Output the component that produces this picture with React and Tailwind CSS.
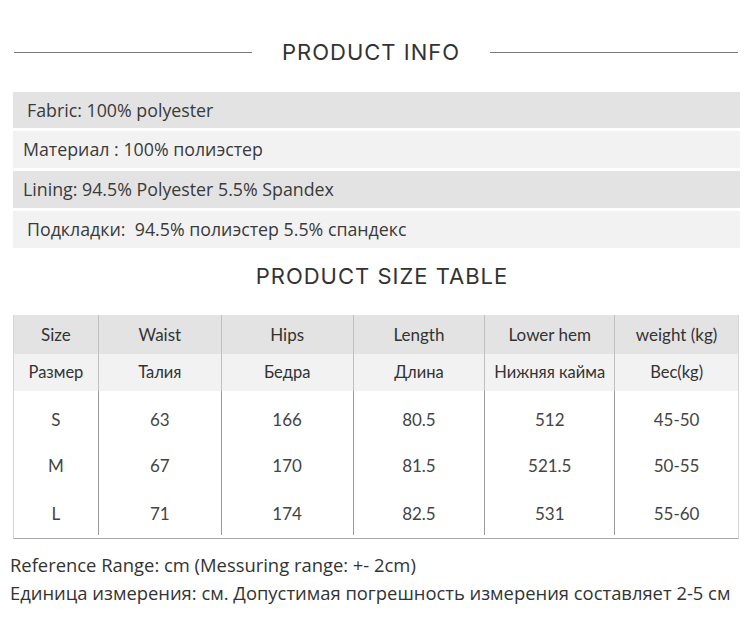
import React from 'react';

const info = [
  { text: 'Fabric: 100% polyester', bg: 'bg-[#e3e3e3]', pad: 'pl-[14px]', h: 'h-[36px]' },
  { text: 'Материал : 100% полиэстер', bg: 'bg-[#f2f2f2]', pad: 'pl-[10px]', h: 'h-[37px]' },
  { text: 'Lining: 94.5% Polyester 5.5% Spandex', bg: 'bg-[#e3e3e3]', pad: 'pl-[10px]', h: 'h-[37px]' },
  { text: 'Подкладки:  94.5% полиэстер 5.5% спандекс', bg: 'bg-[#f2f2f2]', pad: 'pl-[14px]', h: 'h-[37px]' },
];

const cols = ['w-[84px]', 'w-[123px]', 'w-[132px]', 'w-[132px]', 'w-[130px]', 'w-[124px]'];
const head = ['Size', 'Waist', 'Hips', 'Length', 'Lower hem', 'weight (kg)'];
const headRu = ['Размер', 'Талия', 'Бедра', 'Длина', 'Нижняя кайма', 'Вес(kg)'];
const rows = [
  ['S', '63', '166', '80.5', '512', '45-50'],
  ['M', '67', '170', '81.5', '521.5', '50-55'],
  ['L', '71', '174', '82.5', '531', '55-60'],
];

export default function App() {
  return (
    <div className="w-[750px] h-[630px] bg-white text-[#333] font-['Lato','Noto_Sans',sans-serif] overflow-hidden">
      {/* Title */}
      <div className="flex items-center pt-[38px] pl-[14px]">
        <div className="w-[238px] h-px bg-[#7a7a7a]" />
        <h1 className="w-[238px] text-center text-[22px] leading-[28px] tracking-[1px] text-[#333] font-['Inter',sans-serif]">PRODUCT INFO</h1>
        <div className="w-[248px] h-px bg-[#7a7a7a]" />
      </div>

      {/* Info rows */}
      <div className="mt-[26px] ml-[13px] w-[727px] flex flex-col gap-[3px]">
        {info.map((r, i) => (
          <div key={i} className={`${r.bg} ${r.pad} ${r.h} flex items-center text-[17.8px] text-[#3a3a3a] whitespace-pre font-['Open_Sans',sans-serif]`}>
            {r.text}
          </div>
        ))}
      </div>

      <h2 className="mt-[14px] pl-[14px] text-center text-[22px] leading-[28px] tracking-[1px] text-[#333] font-['Inter',sans-serif]">PRODUCT SIZE TABLE</h2>

      {/* Size table */}
      <div className="mt-[25px] ml-[13px] w-[726px] pb-[3px] border-l border-r border-b border-l-[#d4d4d4] border-r-[#d4d4d4] border-b-[#a8a8a8]">
        <div className="flex bg-[#e3e3e3] h-[39px]">
          {head.map((h, i) => (
            <div key={i} className={`${cols[i]} flex items-center justify-center text-[17px] text-[#333] ${i > 0 ? 'border-l border-[#c0c0c0]' : ''}`}>{h}</div>
          ))}
        </div>
        <div className="flex bg-[#f2f2f2] h-[37px]">
          {headRu.map((h, i) => (
            <div key={i} className={`${cols[i]} flex items-center justify-center text-[16.5px] text-[#333] ${i > 0 ? 'border-l border-[#c0c0c0]' : ''}`}>{h}</div>
          ))}
        </div>
        <div className="flex flex-col">
          {rows.map((r, ri) => (
            <div key={ri} className="flex h-[48px]">
              {r.map((c, i) => (
                <div key={i} className={`${cols[i]} flex items-center justify-center text-[17px] text-[#444] ${ri === 0 ? 'pt-[10px]' : 'pt-[5px]'} ${i > 0 ? 'border-l border-[#9a9a9a]' : ''}`}>{c}</div>
              ))}
            </div>
          ))}
        </div>
      </div>

      {/* Notes */}
      <div className="mt-[12px] pl-[10px] text-[18.4px] text-[#333] leading-[28px] font-['Open_Sans',sans-serif]">
        <p>Reference Range: cm (Messuring range: +- 2cm)</p>
        <p>Единица измерения: см. Допустимая погрешность измерения составляет 2-5 см</p>
      </div>
    </div>
  );
}
